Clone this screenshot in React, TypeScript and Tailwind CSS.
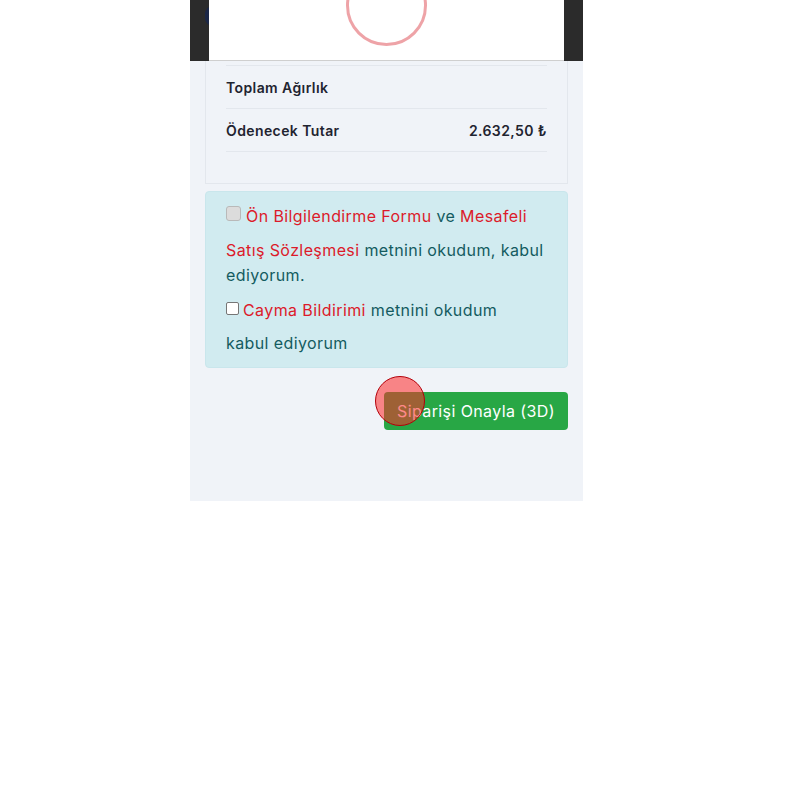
import React from "react";

function CheckLine({ children }: { children: React.ReactNode }) {
  return <div className="leading-[25px] whitespace-nowrap">{children}</div>;
}

export default function App() {
  return (
    <div className="w-[800px] h-[800px] bg-white font-['Inter',sans-serif]">
      <div className="relative ml-[190px] w-[393px] bg-[#f0f3f8] pb-[71px]">
        {/* modal overlay at the top */}
        <div className="relative h-[61px] bg-[#2b2b2b] px-[19px] flex">
          <div className="absolute left-[15px] top-[6px] w-[8px] h-[20px] rounded-l-full bg-[#1b2747]" />
          <div className="relative flex-1 bg-white border-b border-[#cfcfcf] overflow-hidden">
            <div className="absolute left-[137px] top-[-35px] w-[81px] h-[81px] rounded-full border-[3px] border-[#eea3a7]" />
          </div>
        </div>

        <div className="mx-[15px] border-x border-b border-[#e3e7ed] px-[20px] pt-[4px] pb-[31px]">
          <div className="border-t border-[#e3e7ed]">
            <div className="h-[43px] flex items-center justify-between border-b border-[#e3e7ed] text-[14px] tracking-[0.4px] font-semibold text-[#1f2430]">
              <span>Toplam Ağırlık</span>
            </div>
            <div className="h-[43px] pt-[1px] flex items-center justify-between border-b border-[#e3e7ed] text-[14px] tracking-[0.4px] font-semibold text-[#1f2430]">
              <span>Ödenecek Tutar</span>
              <span>2.632,50 ₺</span>
            </div>
          </div>
        </div>

        <div className="mt-[7px] ml-[15px] mr-[15px] rounded-[4px] border border-[#c9e6ec] bg-[#d1ebf0] pl-[20px] pt-[12px] pb-[11px] text-[16px] tracking-[0.4px] text-[#145b60]">
          <CheckLine>
            <span className="inline-flex items-center">
              <span className="inline-block w-[15px] h-[15px] mr-[5px] rounded-[3px] border border-[#b9b9b9] bg-[#dcdcdc] -translate-y-[3px]" />
              <span className="text-[#dc1a2a]">Ön Bilgilendirme Formu</span>
              <span>&nbsp;ve&nbsp;</span>
              <span className="text-[#dc1a2a]">Mesafeli</span>
            </span>
          </CheckLine>
          <div className="mt-[7px]">
            <CheckLine>
              <span className="text-[#dc1a2a]">Satış Sözleşmesi</span> metnini okudum, kabul
            </CheckLine>
            <CheckLine>ediyorum.</CheckLine>
          </div>
          <div className="mt-[10px]">
            <CheckLine>
              <span className="inline-flex items-center">
                <span className="inline-block w-[13px] h-[13px] mr-[4px] rounded-[2px] border border-[#767676] bg-white -translate-y-[2px]" />
                <span className="text-[#dc1a2a]">Cayma Bildirimi</span>
                <span>&nbsp;metnini okudum</span>
              </span>
            </CheckLine>
          </div>
          <div className="mt-[7px]">
            <CheckLine>kabul ediyorum</CheckLine>
          </div>
        </div>

        <div className="mt-[24px] mr-[15px] flex justify-end">
          <button className="w-[184px] h-[38px] rounded-[4px] bg-[#28a745] text-white text-[16px] tracking-[0.4px]">
            Siparişi Onayla (3D)
          </button>
        </div>

        {/* click marker */}
        <div className="absolute left-[185px] top-[376px] w-[50px] h-[50px] rounded-full border border-[#b3000a] bg-[rgba(255,40,40,0.55)]" />
      </div>
    </div>
  );
}
